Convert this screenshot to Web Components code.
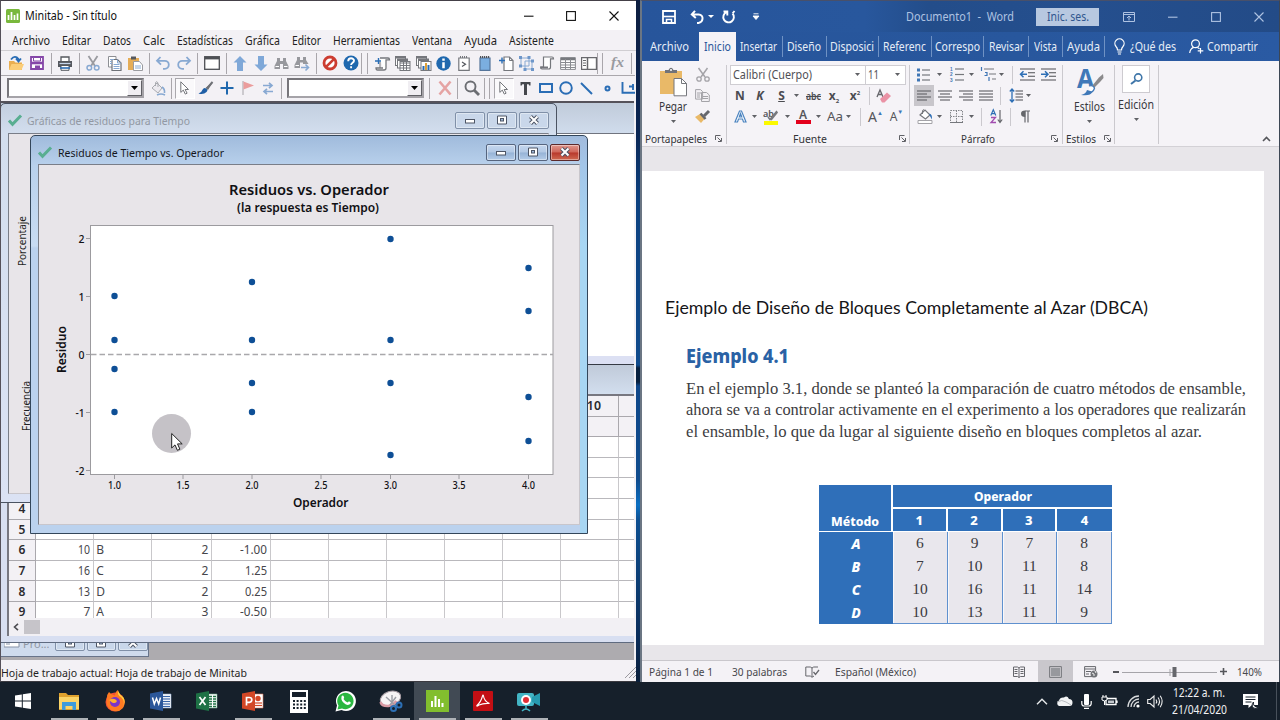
<!DOCTYPE html>
<html lang="es">
<head>
<meta charset="utf-8">
<title>Escritorio</title>
<style>
html,body{margin:0;padding:0;width:1280px;height:720px;overflow:hidden;background:#16202b;font-family:"Noto Sans","Open Sans",sans-serif}
</style>
</head>
<body>
<desk-top></desk-top>
<script>
/* Icon drawings: [width, height, markup] */
const G='#75777c', B='#2a6db5', L='#88a9d2';
const sheet=(x,y)=>`<rect x="${x}" y="${y}" width="10" height="9" fill="#fff" stroke="${G}"/><path d="M${x} ${y+1}h10" stroke="${G}" stroke-width="2"/>`;
const lines=(ys,x1,x2,c='#68696d')=>ys.map(y=>`<path d="M${x1} ${y}H${x2}" stroke="${c}" stroke-width="1.2"/>`).join('');
const ICONS={
 minitab:[14,14,`<rect width="14" height="14" rx="1.5" fill="#79b83c"/><path d="M2.5 11V6M5.5 11V3M8.5 11V6M11.5 11V4.5" stroke="#fff" stroke-width="1.7"/>`],
 min:[10,10,`<path d="M0 5.2h9.500" stroke="currentColor" stroke-width="1.1"/>`],
 max:[10,10,`<rect x=".6" y=".6" width="8.800" height="8.800" fill="none" stroke="currentColor" stroke-width="1.1"/>`],
 close:[10,10,`<path d="M.5.500l9 9M9.500.500l-9 9" stroke="currentColor" stroke-width="1.1"/>`],
 open:[16,16,`<path d="M1 6h5l1.500 1.500H14V15H1z" fill="#e9ae50"/><path d="M3.500 9H16l-2.500 6H1z" fill="#fbcd77"/><path d="M3 4.500Q7-.5 10.500 4v2.500M13 3.500l-2.500 3-2.500-3" fill="none" stroke="${B}" stroke-width="1.8"/>`],
 save:[14,14,`<path d="M1 1h12v12H1z" fill="#fff" stroke="#8546a8" stroke-width="1.800"/><path d="M3.500 1.500h7V5h-7z" fill="#fff" stroke="#8546a8"/><path d="M1 7h12" stroke="#8546a8" stroke-width="2.600"/><path d="M5 9.500h5V13H5z" fill="#8546a8"/>`],
 print:[16,15,`<path d="M4 5V1h8v4" fill="#fff" stroke="#55585e" stroke-width="1.300"/><path d="M1 5h14v6H1z" fill="#55585e"/><path d="M2.500 7.500h11" stroke="#c5d5ea" stroke-width="1.200"/><path d="M4 9.500h8v4.800H4z" fill="#fff" stroke="#55585e"/><path d="M3 12h10" stroke="${B}" stroke-width="1.600"/>`],
 cut:[14,15,`<path d="M2.500 0L9 10M11.500 0L5 10" stroke="#9a9ba0" stroke-width="1.800"/><circle cx="3.300" cy="11.800" r="2.300" fill="none" stroke="${L}" stroke-width="1.500"/><circle cx="10.700" cy="11.800" r="2.300" fill="none" stroke="${L}" stroke-width="1.500"/>`],
 copy:[15,15,`<path d="M1.500.500H9V11H1.500z" fill="#fff" stroke="#8d8f94"/><path d="M5 3.500h5.500L14 7v7.500H5z" fill="#fff" stroke="#6e7177" stroke-width="1.200"/><path d="M10.500 3.500V7H14M6.500 8.500h6M6.500 10.500h6M6.500 12.500h6M3 3.500h4M3 5.500h2M3 7.500h2" stroke="${L}" fill="none"/>`],
 paste:[15,15,`<path d="M0 2h11v12H0z" fill="#e5ad57"/><path d="M3 .5h5v3H3z" fill="#55585e"/><path d="M5.500 5.500h6L14.500 9v5.500h-9z" fill="#fff" stroke="#9a9ba0"/><path d="M7 10h6M7 12h6" stroke="${L}"/>`],
 undo:[16,14,`<path d="M5.500 1L2 4.800l4 3.800M2.300 4.800h7.500a4 4 0 0 1 0 8H8" fill="none" stroke="${L}" stroke-width="1.800"/>`],
 redo:[16,14,`<path d="M10.500 1L14 4.800l-4 3.800M13.700 4.800H6.200a4 4 0 0 0 0 8H8" fill="none" stroke="${L}" stroke-width="1.800"/>`],
 window:[16,14,`<rect x=".7" y=".7" width="14.600" height="12.600" fill="#fff" stroke="#4d4f54" stroke-width="1.300"/><path d="M1 2.200h14" stroke="#4d4f54" stroke-width="2.400"/>`],
 up:[14,15,`<path d="M7 0l6.500 6.500H10V15H4V6.500H.5z" fill="#7fa8d8"/>`],
 down:[14,15,`<path d="M7 15l6.500-6.500H10V0H4v8.500H.5z" fill="#7fa8d8"/>`],
 find:[15,13,`<path d="M3 1h3v3h3V1h3v3l2.500 5v3H9V7H6v5H.5V9L3 4z" fill="#97989d"/><path d="M1.500 9.500h3.500M10 9.500h3.500" stroke="#fff"/>`],
 findn:[16,15,`<path d="M3 1h3v3h3V1h3v3l2.500 4H9V6.500H6V12H.5V9L3 4z" fill="#97989d"/><path d="M1.500 9.500h3.500" stroke="#fff"/><path d="M7 11.500h7M11.500 8.500l3 3-3 3" stroke="#88a9d2" stroke-width="1.600" fill="none"/>`],
 stop:[16,16,`<circle cx="8" cy="8" r="6" fill="#fff" stroke="#cc3d31" stroke-width="2.800"/><path d="M3.800 12.200l8.400-8.400" stroke="#cc3d31" stroke-width="2.600"/>`],
 help:[16,16,`<circle cx="8" cy="8" r="7.500" fill="#1f68ae"/><path d="M5.200 6.200c0-4 5.800-3.600 5.800-.5C11 7.800 8.100 7.700 8.100 10M8.100 11.300v2" fill="none" stroke="#fff" stroke-width="1.900"/>`],
 session:[15,15,`<path d="M5 2h8q1.500 0 1.500 1.800H11V12q0 2-2 2H2.500q-1.500 0-1.500-2h7" fill="#fff" stroke="${G}" stroke-width="1.300"/><path d="M5 6v6" stroke="${G}"/><path d="M0 5h6M3.500 2v6" stroke="${B}" stroke-width="1.400"/>`],
 sheets:[16,15,sheet(.5,.5)+sheet(2.500,3)+`<rect x="5" y="5.500" width="10" height="9" fill="#fff" stroke="${G}"/><path d="M5 7h10M5 9.500h10M5 12h10M8.500 6v8M11.500 6v8" stroke="${G}"/>`],
 graphs:[16,15,sheet(.5,.5)+sheet(2.500,3)+`<rect x="5" y="5.500" width="10" height="9" fill="#fff" stroke="${G}"/><path d="M7.500 14v-4M12.500 14V9" stroke="${B}" stroke-width="2"/><path d="M10 14V7" stroke="#dfa139" stroke-width="2"/>`],
 info:[15,15,`<circle cx="7.500" cy="7.500" r="7.200" fill="#1f68ae"/><path d="M7.500 6.200v6M7.500 2.500v2.200" stroke="#fff" stroke-width="2.500"/>`],
 report:[12,15,`<path d="M.8 2h10.400v12.300H.8z" fill="#fff" stroke="${G}" stroke-width="1.200"/><path d="M2 1h8" stroke="${G}" stroke-width="2" stroke-dasharray="1 1"/><path d="M4 6l3.500 2.200L4 10.500" fill="none" stroke="#55585e" stroke-width="1.200"/>`],
 note:[12,15,`<path d="M1 2h10v12.300H1z" fill="#7baee0" stroke="#55759b" stroke-width="1.200"/><path d="M1 1h10" stroke="#505359" stroke-width="2" stroke-dasharray="1.200 .8"/>`],
 addpage:[15,15,`<path d="M5 1h5.500L14 4.500v10H5z" fill="#fff" stroke="${G}" stroke-width="1.200"/><path d="M10.500 1v3.500H14" fill="none" stroke="${G}"/><path d="M0 4.500h6M3 1.500v6" stroke="${B}" stroke-width="1.400"/>`],
 connect:[15,15,`<path d="M2 2h8v8H2zM6 5h7v8H6z" fill="none" stroke="${L}"/><path d="M0 0h3v3H0zM8.500 0h3v3h-3zM0 8.500h3v3H0zM4.500 12h3v3h-3zM12 12h3v3h-3zM12 3.500h3v3h-3z" fill="#6d96c9"/>`],
 script:[14,14,`<path d="M3.500 1H12q1.500 0 1.500 1.800H10.500V11q0 2-2 2H2Q.6 13 .6 11H3.500z" fill="#fff" stroke="${G}" stroke-width="1.200"/><path d="M.6 11.500H8" stroke="${G}" stroke-width="2"/>`],
 table:[16,13,`<path d="M.6.600h14.800v11.800H.6z" fill="#fff" stroke="#898b90"/><path d="M1 2h14" stroke="#77797e" stroke-width="2.500"/><path d="M1 5.500h14M1 8h14M1 10.500h14M5.500 2v10M10.500 2v10" stroke="#898b90"/>`],
 panel:[16,13,`<path d="M.6.600h14.800v11.800H.6z" fill="#fff" stroke="#68696d" stroke-width="1.200"/><path d="M6.500 0v13" stroke="#68696d" stroke-width="1.500"/><path d="M2 3.500h3M2 6h3M2 8.500h3" stroke="#68696d"/>`],
 bucket:[15,15,`<path d="M1 7l5-5 5 5-4 5z" fill="#eceaef" stroke="#a9abb0"/><path d="M4.500 5V1.500Q6-.5 7 2v4" fill="none" stroke="#a9abb0"/><path d="M11 6q3 2 2.500 6" fill="none" stroke="${L}" stroke-width="1.600"/><path d="M6 14q4-2 8 0" stroke="${L}" stroke-width="1.500" fill="none"/>`],
 arrow:[10,14,`<path d="M.8.800v10.600l2.500-2.300 2 4 1.800-.9-2-3.700h3.400z" fill="#fff" stroke="#75777c"/>`],
 brush:[16,14,`<path d="M15 .5L10 9 7.500 7z" fill="#6f7176"/><path d="M14.500 1L9 7.500" stroke="#6f7176" stroke-width="2"/><path d="M8 7.500Q10.500 9 8.500 11q-3 3-8 1.500 3-.5 3.800-3.500Q6 6 8 7.500z" fill="#1f5fa6"/>`],
 plus:[14,14,`<path d="M7 .5v13M.5 7h13" stroke="#1f68ae" stroke-width="2"/>`],
 flag:[12,14,`<path d="M1 0v14" stroke="#a5a3a8"/><path d="M1.500 .5L12 4.500 1.500 8.500z" fill="#eb9c9c"/>`],
 swap:[10,13,`<path d="M0 3.500h9M6 .8l3 2.700-3 2.700M10 9.500H1M4 6.800L1 9.500l3 2.700" fill="none" stroke="${L}" stroke-width="1.700"/>`],
 del:[14,14,`<path d="M1.500.500l11 13M12.500.500l-11 13" stroke="#e5a3a3" stroke-width="2.600"/>`],
 lens:[16,16,`<circle cx="6.500" cy="6.500" r="5" fill="none" stroke="#6b6d72" stroke-width="1.900"/><path d="M10 10l5 5" stroke="#6b6d72" stroke-width="2.800"/>`],
 tee:[11,13,`<path d="M.5 0h10v3.500H9.200L8.700 2.200H7V13H4V2.200H2.300L1.800 3.500H.5z" fill="#45474c"/>`],
 rect:[14,10,`<rect x="1" y="1" width="12" height="8" fill="none" stroke="${B}" stroke-width="2"/>`],
 circ:[14,14,`<circle cx="7" cy="7" r="5.800" fill="none" stroke="${B}" stroke-width="1.900"/>`],
 line:[13,13,`<path d="M1 1l11 11" stroke="${B}" stroke-width="2"/>`],
 dot:[7,7,`<circle cx="3.500" cy="3.500" r="2" fill="none" stroke="${B}" stroke-width="2"/>`],
 poly:[14,12,`<path d="M1.500 0v10.800H14M8 4.500h5M12 2v6" fill="none" stroke="${B}" stroke-width="1.900"/>`],
 fx:[15,16,`<text x="0" y="12" font-family="Liberation Serif,serif" font-style="italic" font-weight="600" font-size="15.500" fill="#9a9ba0">fx</text>`],
 check:[14,12,`<path d="M1 6.500l3.500 3.800L13 1.500" fill="none" stroke="#59ae91" stroke-width="3"/>`],
 drop:[5,3,`<path d="M0 0h5L2.500 3z" fill="#606166"/>`],
 dropw:[6,3,`<path d="M0 0h6L3 3z" fill="#fff"/>`],
 dropb:[7,4,`<path d="M0 0h7L3.500 4z" fill="#000"/>`],
 wsave:[14,14,`<path d="M1 1h12v12H1z" fill="none" stroke="#fff" stroke-width="1.800"/><path d="M1 6.500h12" stroke="#fff" stroke-width="1.600"/><path d="M4.500 13V9.500h5V13" fill="none" stroke="#fff" stroke-width="1.500"/>`],
 wundo:[14,14,`<path d="M5 .8L1.800 4.500 5.800 8M2 4.500h6.500q4.500.5 4 4.500-.5 3.500-4 4H7" fill="none" stroke="#fff" stroke-width="2"/>`],
 wredo:[14,14,`<path d="M4.500 2.200A5.300 5.300 0 1 0 10.500 3.500M5.300 5.500V1.500H1.500M10.500 3.500L12.500 1" fill="none" stroke="#fff" stroke-width="1.900"/>`],
 wmore:[6,7,`<path d="M.5.800h5M0 3h6L3 6.500z" stroke="#fff" fill="#fff" stroke-width=".9"/>`],
 wdisp:[12,10,`<path d="M.5.500h11v9H.5zM.5 2.500h11M6 8.500V4M4 6l2-2 2 2" fill="none" stroke="currentColor"/>`],
 bulb:[11,16,`<path d="M3.500 11q0-2-1.500-3.500A4.600 4.600 0 1 1 9 7.500Q7.500 9 7.500 11z" fill="none" stroke="#fff" stroke-width="1.200"/><path d="M3.500 13h4M4 15h3" stroke="#fff" stroke-width="1.200"/>`],
 person:[15,15,`<circle cx="6.500" cy="4.800" r="3.900" fill="none" stroke="#fff" stroke-width="1.200"/><path d="M.7 14q.5-4.500 4-5.600M8.500 8.500l2 1.200M11.500 9v5.500M8.700 11.800h5.600" fill="none" stroke="#fff" stroke-width="1.200"/>`],
 clip:[28,30,`<path d="M1 4h22v23H1z" fill="#e9b968"/><path d="M6 6V3h3.500Q12-1.500 14.500 3H18v3z" fill="#717379"/><circle cx="12" cy="3" r="1" fill="#fff"/><path d="M15 11.500h7.500l5 5v12.300H15z" fill="#fff" stroke="#75777c"/><path d="M22.500 11.500v5h5" fill="none" stroke="#75777c"/>`],
 wcut:[14,14,`<path d="M2.500 0l6.500 9M11.500 0L5 9" stroke="#a4a3a8" stroke-width="1.500"/><circle cx="3" cy="11" r="2.200" fill="none" stroke="#a4a3a8" stroke-width="1.300"/><circle cx="11" cy="11" r="2.200" fill="none" stroke="#a4a3a8" stroke-width="1.300"/>`],
 wcopy:[15,13,`<path d="M.6.600h5l2 2v7.500h-7zM6.500 3.500h5L14.300 6v6.500H6.500z" fill="#f3f1f5" stroke="#a4a3a8"/><path d="M2 4h4M2 6h3M2 8h3M8 7.500h5M8 9.500h5" stroke="#a4a3a8"/>`],
 painter:[15,13,`<path d="M0 7l5-3 4.500 5L6 13z" fill="#e9b968"/><path d="M5.500 3.500l5 5.500" stroke="#66676c" stroke-width="2.600"/><path d="M9 6l5-5" stroke="#66676c" stroke-width="3"/>`],
 clear:[14,14,`<path d="M0 8L3 1l3 7M1 5.500h4" fill="none" stroke="#66676c" stroke-width="1.300"/><path d="M3 10l7-6.500 4 3.500L7.500 13.500H5z" fill="#ea92a5"/>`],
 aout:[13,13,`<path d="M1 12L5.500 1h2L12 12H9.500L8.500 9h-4l-1 3zM5.300 7h2.500L6.500 3.500z" fill="#fff" stroke="#4c84c0" stroke-width="1.200"/>`],
 hilite:[16,16,`<text x="0" y="8" font-size="9" font-weight="600" font-family="Noto Sans,sans-serif" fill="#515257">ab</text><path d="M14 2L7 10.500 5 8M14.500 3L8 11" fill="none" stroke="#77797e" stroke-width="1.600"/><path d="M1 14h14" stroke="#fbf900" stroke-width="4"/>`],
 acolor:[15,15,`<text x="3" y="9.500" font-size="12" font-weight="600" font-family="Noto Sans,sans-serif" fill="#55565b">A</text><path d="M0 13h15" stroke="#e3001b" stroke-width="4"/>`],
 bullets:[13,14,[2,7,12].map(y=>`<rect x="0" y="${y-1.500}" width="3" height="3" fill="#3f76b5"/><path d="M5 ${y}h8" stroke="#75777c" stroke-width="1.200"/>`).join('')],
 numbers:[14,15,[2,7.500,13].map((y,i)=>`<text x="0" y="${y+1.700}" font-size="4.700" font-weight="700" font-family="Liberation Sans,sans-serif" fill="#3f76b5">${i+1}</text><path d="M5 ${y}h9" stroke="#75777c" stroke-width="1.200"/>`).join('')],
 multi:[16,15,`<path d="M1.500 0v4M5 5.500h2v3H4.500M9 10v4" stroke="#3f76b5" stroke-width="1.200" fill="none"/><path d="M4 2h10M9 7h7M12 12h4" stroke="#75777c" stroke-width="1.200"/>`],
 outdent:[15,13,lines([1,12],0,15)+lines([4.700,8.300],8,15)+`<path d="M0 6.300h7M3.500 3.300l-3 3 3 3" fill="none" stroke="#2e6fb5" stroke-width="1.500"/>`],
 indent:[15,13,lines([1,12],0,15)+lines([4.700,8.300],8,15)+`<path d="M0 6.300h7M4 3.300l3 3-3 3" fill="none" stroke="#2e6fb5" stroke-width="1.500"/>`],
 al:[14,11,lines([1,7],0,14)+lines([4,10],0,10)],
 ac:[14,11,lines([1,7],0,14)+lines([4,10],2,12)],
 ar:[14,11,lines([1,7],0,14)+lines([4,10],4,14)],
 aj:[14,11,lines([1,4,7,10],0,14)],
 spacing:[14,15,`<path d="M3 1v13M.8 3.500L3 1l2.200 2.500M.8 11.500L3 14l2.200-2.500" fill="none" stroke="#2e6fb5" stroke-width="1.300"/>`+lines([3,6,9,12],6.500,14)],
 wbucket:[16,15,`<path d="M3 6l5-5 5 5-4.500 4z" fill="#fff" stroke="#75777c" stroke-width="1.200"/><path d="M5.500 5V1.500Q6.500-.5 7.500 2" fill="none" stroke="#75777c"/><path d="M12.500 4.500q3.500 1.500 2 6-.8-3-2-4z" fill="#2e6fb5"/><path d="M1 11.500h14v3H1z" fill="#fff" stroke="#a4a3a8"/>`],
 borders:[13,13,`<path d="M.5.500h12v12H.5zM6.500.500v12M.5 6.500h12" fill="none" stroke="#85868b" stroke-dasharray="1.500 1"/><path d="M0 12.500h13" stroke="#75777c"/>`],
 sort:[13,15,`<path d="M.8 6.500L3.300.800l2.500 5.700M1.500 4.700h3.600" fill="none" stroke="#2e6fb5" stroke-width="1.200"/><path d="M1 8.500h4.500L1 13.500h5" fill="none" stroke="#a24db0" stroke-width="1.300"/><path d="M10 1v12M7.800 10.500L10 13.500l2.200-3" fill="none" stroke="#66676c" stroke-width="1.200"/>`],
 para:[10,13,`<path d="M5 1v11.500M8 1v11.500M10 1H5" stroke="#66676c" stroke-width="1.200" fill="none"/><path d="M5.300.500v6.500Q1 7 1 3.700T5.300.500z" fill="#66676c"/>`],
 styles:[28,30,`<text x="1" y="21" font-family="Noto Sans,sans-serif" font-weight="700" font-size="26" textLength="17" lengthAdjust="spacingAndGlyphs" fill="#3f78b8">A</text><path d="M16 19l7-8.500 4-3.500.5 4-3.500 4-6 6z" fill="#8b8a8c"/><path d="M13 19q4-1.500 5.500 2-1 4-5 5" fill="#fff" stroke="#3f78b8" stroke-width="1.300"/><path d="M5 28q5-1 6-5l5 1.500q-1 5-11 3.500z" fill="#3f78b8"/>`],
 edit:[28,28,`<rect x=".5" y=".5" width="27" height="27" fill="#fff" stroke="#cdcbd0"/><circle cx="16.200" cy="12.500" r="3.600" fill="none" stroke="#3f76a9" stroke-width="1.600"/><path d="M13.500 15.500L9 19" stroke="#3f76a9" stroke-width="2"/>`],
 launch:[7,7,`<path d="M.5 5V.5H5.500M2.500 2.500l3.500 3.500M6.500 3v3.500H3" fill="none" stroke="#606166"/>`],
 collapse:[9,6,`<path d="M1 5l3.500-3.500L8 5" fill="none" stroke="#55565b" stroke-width="1.600"/>`],
 proof:[14,12,`<path d="M.8 1h4.500l1.700 1 1.700-1H13M.8 1v9h4.500L7 11.300 9 10M7 2v9" fill="none" stroke="#66676c"/><path d="M8.500 6l2 2.500L14 4" fill="none" stroke="#66676c" stroke-width="1.300"/>`],
 read:[12,12,`<path d="M.5 1h4L6 2l1.500-1h4v9.500h-4L6 11.500l-1.500-1h-4zM6 2v9.500M1.500 3.500h3M1.500 5.500h3M1.500 7.500h3M7.500 3.500h3M7.500 5.500h3M7.500 7.500h3" fill="none" stroke="#66676c"/>`],
 pview:[13,12,`<path d="M.6.600h11.800v10.800H.6z" fill="none" stroke="#77787d"/>`+lines([3,5,7,9],2,11,'#77787d')],
 web:[14,12,`<path d="M.6.600h11v10H.6zM1 3h10M2 5.500h5M2 8h3" fill="none" stroke="#66676c"/><circle cx="10" cy="8" r="3.500" fill="#717277"/><path d="M8 7l2 1v2M11 5l1 2" stroke="#eee" fill="none"/>`],
 start:[16,16,`<path d="M0 2.500l6.800-1v6H0zM7.800 1.300L16 0v7.500H7.800zM0 8.500h6.800v6L0 13.500zM7.800 8.500H16V16l-8.200-1.300z" fill="#fff"/>`],
 explorer:[22,18,`<path d="M1 1h7l2 2h11v15H1z" fill="#e0a22e"/><path d="M1 5h20v12H1z" fill="#fbd467"/><path d="M4 10h14v8h-3.500v-4h-7v4H4z" fill="#3d9bdb"/>`],
 firefox:[22,22,`<circle cx="11" cy="12" r="9.500" fill="#f04e35"/><path d="M3 8Q1 16 7 20q7 3.500 12-2 4-7-1-12-3-1-4-6-3 2-3 5.500Q7 5 5 2 3 4 3 8z" fill="#ff7a22"/><path d="M14 1q-1 4 3 6 5 5 1.500 10.500Q22 12 19.500 7.500 16 5 14 1z" fill="#ffd33f"/><circle cx="11" cy="12" r="5" fill="#7a35c8"/><path d="M5 10q5-3 8 1-1 3-5 1.500" fill="#ffb02e"/>`],
 word:[22,20,`<path d="M11 3h10v14H11z" fill="#fff" stroke="#8da7cf" stroke-width=".6"/>`+lines([5.500,8,10.500,13,15.500],13,20,'#3765aa')+`<path d="M0 2.500L13 0v20L0 17.500z" fill="#2b579a"/><path d="M2.500 6.500L4.300 13 6.500 7.500 8.700 13l1.800-6.500" fill="none" stroke="#fff" stroke-width="1.500"/>`],
 excel:[22,20,`<path d="M11 3h10v14H11z" fill="#fff" stroke="#71a88a" stroke-width=".6"/><path d="M13 5.500h7M13 8h7M13 10.500h7M13 13h7M13 15.500h7" stroke="#217346" stroke-width="1.600" stroke-dasharray="3 1"/><path d="M0 2.500L13 0v20L0 17.500z" fill="#1e7145"/><path d="M3.500 6l6 8M9.500 6l-6 8" stroke="#fff" stroke-width="1.700"/>`],
 ppt:[22,20,`<path d="M11 3h10v14H11z" fill="#fff" stroke="#d87b60" stroke-width=".6"/><circle cx="16" cy="7.500" r="2.700" fill="#d24726"/>`+lines([12,14.500],13,20,'#d24726')+`<path d="M0 2.500L13 0v20L0 17.500z" fill="#d24726"/><path d="M4.500 14.500v-8h2.800q2.500 0 2.500 2.300T7.300 11.300H4.500" fill="none" stroke="#fff" stroke-width="1.700"/>`],
 calc:[18,23,`<rect width="18" height="23" fill="#fff"/><rect x="2" y="2" width="14" height="5" fill="#16202b"/><path d="M3 11h13M3 14.500h13M3 18h13" stroke="#16202b" stroke-width="2" stroke-dasharray="2 1.600"/>`],
 whats:[21,22,`<path d="M.5 21.500l1.500-6A10 10 0 1 1 6.500 20z" fill="#fff"/><path d="M2.500 19.500l1-4A8.200 8.200 0 1 1 7 18.500z" fill="#2bb741"/><path d="M6.500 6.500q1.500-2 2.500.5.5 1-.5 2 1.500 2.500 4 3.500 1-1.500 2-1 2 1 1 2.300-2 2-5 .5Q5.500 11 6.500 6.500z" fill="#fff"/>`],
 snip:[24,22,`<ellipse cx="11.500" cy="8.500" rx="10.500" ry="7" fill="#f6f3f4" stroke="#a89da4" transform="rotate(-18 11.500 8.500)"/><path d="M1.500 12q1.500 4.500 8 4 5-1 8-5" fill="none" stroke="#d99aa3" stroke-width="2.500"/><path d="M13 5v7M7 7l10 9M17 7l-6 8" stroke="#9b9da4" stroke-width="1.400"/><circle cx="20" cy="15" r="2.500" fill="none" stroke="#2c6fb5" stroke-width="2"/><circle cx="14.500" cy="18.500" r="2.500" fill="none" stroke="#2c6fb5" stroke-width="2"/>`],
 tminitab:[23,22,`<rect width="23" height="22" fill="#82be2e"/><path d="M6 17v-6M9.500 17V6M13 17V9M16.500 17v-4" stroke="#fff" stroke-width="2"/>`],
 acrobat:[20,20,`<rect width="20" height="20" rx="1" fill="#c30f14"/><path d="M3.500 15Q8 11 9.500 5q.5-2 1 0 .5 5 6 7.500-6-.5-10.500 1.500-2 1.500-2.500 1" fill="none" stroke="#fff" stroke-width="1.100"/>`],
 camera:[24,21,`<rect x="0" y="2" width="17" height="13" rx="2" fill="#43b5c5"/><path d="M15 6l8-4v13l-8-4z" fill="#279bb0"/><circle cx="9" cy="9" r="5" fill="#fff"/><circle cx="9" cy="9" r="3" fill="#e02f35"/><path d="M9 15v3M5 20q4-4 8 0" fill="none" stroke="#43b5c5" stroke-width="1.500"/>`],
 chev:[12,7,`<path d="M1 6.300L6 1.300l5 5" fill="none" stroke="#e8eaec" stroke-width="1.400"/>`],
 cloud:[17,10,`<path d="M3 10a3 3 0 0 1 0-5.500Q4 1 8 1.500q3-2.500 5 1.500 3.500 0 3.500 3.500T13.500 10z" fill="#f2f3f4"/><path d="M1 6q5-3 9 0l5 3" fill="none" stroke="#a9adb2" stroke-width=".8"/>`],
 mic:[11,15,`<rect x="3" width="5" height="11" rx="1" fill="#fff"/><path d="M.8 7v2.500q0 2.500 2.500 2.500h4.400q2.500 0 2.500-2.500V7M3 14.300h5" fill="none" stroke="#fff" stroke-width="1.200"/>`],
 battery:[16,12,`<path d="M4 3.500h10v6H4zM15 5.500v2.500" fill="none" stroke="#fff" stroke-width="1.300"/><path d="M6 5.500h6v2.500H6z" fill="#c5c9ce"/><path d="M0 2h5v3Q2.500 7 0 5zM1 0v2M4 0v2M2.500 6v4" stroke="#fff" fill="#16202b"/>`],
 wifi:[13,13,`<path d="M1 12A11 11 0 0 1 12 1M4 12a8 8 0 0 1 8-8M7 12a5 5 0 0 1 5-5" fill="none" stroke="#d9dbdd" stroke-width="1.300"/><circle cx="11" cy="11" r="1.600" fill="#fff"/>`],
 vol:[16,13,`<path d="M.7 4.500h2.500L7 1v11L3.200 8.500H.7z" fill="none" stroke="#eee" stroke-width="1.100"/><path d="M9 4.500q1.500 2 0 4M11 2.500q3 4 0 8M13.200.800q4 5.500 0 11.400" fill="none" stroke="#eee" stroke-width="1.100"/>`],
 notify:[16,16,`<path d="M0 1h15v11H9l-3.500 3V12H0z" fill="#fff"/><path d="M2.500 4h10M2.500 6.500h10M2.500 9h6" stroke="#16202b"/><path d="M10.500 15a4 4 0 0 1 0-6 4 4 0 0 0 5 5 4 4 0 0 1-5 1z" fill="#fff" stroke="#16202b"/>`],
 gmin:[12,8,`<rect x="1.500" y="3.500" width="9" height="3.500" fill="#fff" stroke="#4d5565" stroke-width="1"/>`],
 gmax:[12,10,`<path d="M1.500 1h9v8h-9z" fill="#fff" stroke="#4d5565"/><rect x="4.500" y="3.500" width="3" height="2.500" fill="#9db8da" stroke="#4d5565"/>`],
 gx:[12,10,`<path d="M2.500 1.500l7 7M9.500 1.500l-7 7" stroke="#4d5565" stroke-width="4"/><path d="M2.500 1.500l7 7M9.500 1.500l-7 7" stroke="#fff" stroke-width="2"/>`]
};

/* Base class: puts a style and markup in an open shadow root */
class Base extends HTMLElement{
  mount(css,html){
    const t=document.createElement('template');
    t.innerHTML=`<style>*{box-sizing:border-box}:host{box-sizing:border-box}${css}</style>${html}`;
    (this.shadowRoot||this.attachShadow({mode:'open'})).replaceChildren(t.content.cloneNode(true));
  }
}
const def=(n,css,html)=>customElements.define(n,class extends Base{connectedCallback(){this.mount(typeof css==='function'?css(this):css,typeof html==='function'?html(this):html)}});

/* Spaces out items along a line: [left, width, markup] */
const flow=(x0,items)=>{let x=x0;return items.map(([l,w,h])=>{const m=l-x;x=l+w;return `<span style="margin-left:${m}px;width:${w}px;flex:none;display:flex;align-items:center;justify-content:center">${h}</span>`}).join('')};
const ic=n=>`<ui-icon name="${n}"></ui-icon>`;
const ci=(c,n)=>{const w=ICONS[n][0];return [c-w/2,w,ic(n)]};
const tx=(l,r,s,st='')=>[l,r-l,`<fit-text w="${r-l}" style="${st}">${s}</fit-text>`];

customElements.define('ui-icon',class extends Base{connectedCallback(){
  const [w,h,m]=ICONS[this.getAttribute('name')];
  this.mount(`:host{display:block;flex:none;width:${w}px;height:${h}px}svg{display:block;overflow:visible}`,`<svg width="${w}" height="${h}" viewBox="0 0 ${w} ${h}">${m}</svg>`);
}});
/* One line of text condensed or widened to a given width */
customElements.define('fit-text',class extends Base{connectedCallback(){
  const w=+this.getAttribute('w');
  this.mount(`:host{display:block;flex:none;width:${w}px;white-space:nowrap}span{display:inline-block;transform-origin:0 50%}:host([strike]) span{text-decoration:line-through}`,`<span><slot></slot></span>`);
  const s=this.shadowRoot.querySelector('span');
  s.style.transform=`scaleX(${w/s.getBoundingClientRect().width})`;
}});
def('tool-sep',`:host{display:block;flex:none;width:1px;height:21px;background:#a9a6ab}`,'');
def('combo-box',`:host{display:flex;height:20px;width:100%;background:#fff;border:2px solid #77757a;border-right-color:#a5a3a8;border-bottom-color:#a5a3a8;justify-content:flex-end}div{width:15px;background:#f0eef2;border:1px solid #fff;border-right-color:#606065;border-bottom-color:#606065;display:flex;align-items:center;justify-content:center}`,`<div>${ic('dropb')}</div>`);
def('pressed-box',`:host{display:flex;width:20px;height:21px;background:#faf9fb;border:1px solid #aaa8ad;border-right-color:#fff;border-bottom-color:#fff;align-items:center;justify-content:center}`,`<slot></slot>`);

/* Framed child window with caption buttons */
def('glass-button',e=>`:host{display:flex;width:30px;height:17px;border:1px solid ${e.hasAttribute('hot')?'#5b2a2c':e.hasAttribute('dim')?'#8090a8':'#56657f'};border-radius:2px;align-items:center;justify-content:center;background:${e.hasAttribute('hot')?'linear-gradient(#e0978d,#cf6558 48%,#b8382b 52%,#cf6a52)':e.hasAttribute('dim')?'#c9d7ea':'linear-gradient(#c5d7ee,#b2c8e4 48%,#96b3d6 52%,#b4cce8)'};box-shadow:inset 0 0 0 1px rgba(255,255,255,.4)}`,`<slot></slot>`);
def('mdi-window',e=>{const a=e.hasAttribute('active');return `
:host{display:flex;flex-direction:column;border:1px solid ${a?'#33465a':'#4b5362'};border-radius:5px 5px 0 0;background:${a?'linear-gradient(#a2bbdc,#a3c6e9 30px,#a8d6f3 110px) right top/7px 100% no-repeat,linear-gradient(#a0bbdc,#b9d1ec 30px,#c8dcf3 110px,#bbd2ee 112px)':'linear-gradient(#c3cfe0,#d3deee 30px,#dbe2f4)'};padding:0 7px 8px;overflow:hidden}
header{height:${a?28:29}px;flex:none;display:flex;align-items:center;font-size:11.500px;color:${a?'#14171d':'#9298a3'};padding-top:${a?4:3}px}
.b{margin-left:auto;display:flex;gap:2px}
main{flex:1;min-height:0;background:#e8e5e9;border:1px solid #7a7e88;border-right-color:#c8c6cc;border-bottom-color:#c8c6cc;overflow:hidden}`},
 e=>{const k=e.hasAttribute('active')?'hot':'dim',d=k==='dim'?'dim':'';return `<header>${ic('check')}<fit-text w="${e.getAttribute('w')}" style="margin-left:${e.hasAttribute('active')?6:5}px">${e.getAttribute('label')}</fit-text><div class="b"><glass-button ${d}>${ic('gmin')}</glass-button><glass-button ${d}>${ic('gmax')}</glass-button><glass-button ${k}>${ic('gx')}</glass-button></div></header><main><slot></slot></main>`});

/* Residual plot */
customElements.define('residual-plot',class extends Base{connectedCallback(){
  const T=(x,y,s,w,o='')=>`<text x="${x}" y="${y}" textLength="${w}" lengthAdjust="spacingAndGlyphs" ${o}>${s}</text>`;
  const xs=[114.500,183,252,321,390.500,459,528.500];
  const pts=[[114.500,296,340,369,412],[252,282,340,383,412],[390.500,239,340,383,455],[528.500,268,311,397,441]];
  this.mount(`:host{display:block;width:541px;height:360px}svg{display:block;font-family:"Noto Sans",sans-serif;fill:#101014}`,
  `<svg width="541" height="360" viewBox="39 165 541 360">
  ${T(229,194.800,'Residuos vs. Operador',160,'font-size="15" font-weight="600"')}
  ${T(237,212,'(la respuesta es Tiempo)',142,'font-size="12.500" font-weight="600"')}
  <rect x="90.500" y="225.500" width="462.500" height="249" fill="#fff" stroke="#9c9b9f"/>
  <path d="M91 354.500H553" stroke="#a9a8ab" stroke-width="1.300" stroke-dasharray="5.500 3"/>
  ${[['2',239],['1',297],['0',355],['-1',413],['-2',471]].map(([s,y])=>`<path d="M86 ${y-.5}h4" stroke="#9c9b9f"/>`+T(s.length>1?75.500:78.500,y+3.800,s,s.length>1?9:6,'font-size="10.500" font-weight="500"')).join('')}
  ${xs.map((x,i)=>`<path d="M${x} 475v4" stroke="#9c9b9f"/>`+T(x-6.500,489.300,(1+i/2).toFixed(1),13,'font-size="10.500" font-weight="500"')).join('')}
  ${T(293,506.500,'Operador',55.500,'font-size="12.500" font-weight="600"')}
  ${T(0,0,'Residuo',47,'font-size="12.500" font-weight="600" transform="translate(65.500 373) rotate(-90)"')}
  ${pts.map(([x,...ys])=>ys.map(y=>`<circle cx="${x}" cy="${y}" r="3.200" fill="#0e4f96"/>`).join('')).join('')}
  </svg>`);
}});

/* Worksheet grid */
customElements.define('work-sheet',class extends Base{connectedCallback(){
  const rows=[['',...Array(9).fill(''),'C10',''],[],['1'],['2'],['3'],['4'],['5'],['6','10','B','2','-1.00'],['7','16','C','2','1.25'],['8','13','D','2','0.25'],['9','7','A','3','-0.50']];
  const W={'10':12,'16':12,'13':12,'-1.00':27,'1.25':22,'0.25':22,'-0.50':27,'C10':22};
  this.mount(`:host{display:flex;flex-direction:column;height:100%;background:#fff}
  .g{height:223px;overflow:hidden;display:grid;grid-template-columns:27px 58.300px 58px 60px 58.500px 58px 58px 58px 58px 58px 58.500px 16px;grid-auto-rows:20.600px;font-size:12px;color:#46464b}
  .g div{border-right:1px solid #c9c8cb;border-bottom:1px solid #b9b8bc;display:flex;align-items:center;justify-content:flex-end;padding:0 3px;overflow:hidden;white-space:nowrap}
  .g .h{background:#f3f1f5;font-weight:600;color:#2a2a2e;justify-content:center;border-color:#aaa8ad}
  .g .l{justify-content:flex-start;padding-left:2px}
  .s{height:18px;background:#f2f0f4;display:flex;align-items:center;padding-left:4px;gap:5px}
  .s i{width:16px;height:14px;background:#c6c4c9}
  svg{display:block}`,
  `<div class="g">${rows.map((r,i)=>Array.from({length:12},(_,j)=>{const v=r[j]||'';return `<div class="${i<2||j===0?'h':j===2?'l':''}">${v&&W[v]&&j?`<fit-text w="${W[v]}">${v}</fit-text>`:v}</div>`}).join('')).join('')}</div>
  <div class="s"><svg width="6" height="8" viewBox="0 0 6 8"><path d="M5 .8L1.500 4 5 7.200" fill="none" stroke="#4d4d52" stroke-width="1.600"/></svg><i></i></div>`);
}});

/* Statistics application window */
customElements.define('minitab-app',class extends Base{connectedCallback(){
  const menu=[['Archivo',12,50],['Editar',62,91],['Datos',103,131],['Calc',143,165],['Estadísticas',177,233],['Gráfica',245,280],['Editor',292,321],['Herramientas',333,400],['Ventana',412,452],['Ayuda',464,497],['Asistente',509,554]];
  const s=x=>[x,1,'<tool-sep></tool-sep>'];
  const t1=[ci(16,'open'),ci(37,'save'),s(51),ci(65,'print'),s(79),ci(93,'cut'),ci(114,'copy'),ci(135,'paste'),s(149),ci(163,'undo'),ci(184,'redo'),s(197),ci(212,'window'),s(226),ci(240,'up'),ci(261,'down'),ci(281,'find'),ci(302,'findn'),s(316),ci(329.500,'stop'),ci(350.500,'help'),s(361),s(367),ci(382,'session'),ci(403,'sheets'),ci(423.500,'graphs'),ci(443.500,'info'),ci(464,'report'),ci(485,'note'),ci(506,'addpage'),ci(526,'connect'),ci(547,'script'),ci(568,'table'),ci(588.500,'panel'),s(597),s(602),ci(618,'fx'),s(631)];
  const pr=`<pressed-box>${ic('arrow')}</pressed-box>`;
  const t2=[[7,137,'<combo-box></combo-box>'],ci(158,'bucket'),s(171),[175,20,pr],ci(206,'brush'),ci(227,'plus'),ci(248,'flag'),ci(268,'swap'),s(281),[287,137,'<combo-box></combo-box>'],s(429),ci(444.500,'del'),s(457),ci(472,'lens'),s(484),s(489),[494,20,pr],ci(525,'tee'),ci(545.500,'rect'),ci(566,'circ'),ci(586.500,'line'),ci(607,'dot'),ci(628,'poly')];
  this.mount(`:host{display:flex;flex-direction:column;width:636px;height:682px;background:#f3f1f5;border-top:1px solid #444047;border-left:1px solid #55515a;border-bottom:1px solid #3b3a40;overflow:hidden;color:#1f1f23;font-size:12px}
  .r{display:flex;align-items:center;flex:none}
  .t{height:29px;background:#fff;color:#111}.m{height:21px;border-bottom:1px solid #d0ced2}.a{height:25px;border-bottom:1px solid #aaa7ac;width:634px;overflow:hidden}.b{height:25px;padding-bottom:1px;width:634px;overflow:hidden}
  .w{position:relative;flex:1;margin-left:-1px;width:634px;background:#adabaf;border-top:2px solid #55525a;overflow:hidden}
  .w>*{position:absolute}
  .st{height:21px;padding-top:3px;justify-content:space-between;font-size:11.500px}
  .ws{left:0;top:261px;width:635px;height:279px;background:#d8dff1;border-top:1px solid #353a44;border-bottom:1px solid #5f6b80;display:flex;flex-direction:column;padding:0 0 7px 7px}
  .ws header{height:31px;flex:none;margin-left:-7px;background:linear-gradient(#c0cad9,#d2deee);border-bottom:2px solid #777780}
  .ws work-sheet{border-left:2px solid #777780;height:240px;flex:none}
  .sn{left:0;top:0;width:635px;height:261px;background:#fff;border-bottom:8px solid #dce0f3}
  .sn header{height:31px;background:linear-gradient(#c0cbda,#d0dcec);border-bottom:1px solid #70747e}
  .mini{left:0;top:540px;width:149px;height:14px;background:#cfdbed;border:1px solid #68748a;border-top:0;display:flex;font-size:11px;color:#9097a3;overflow:hidden;padding-left:3px;gap:2px}
  .mini glass-button{margin-top:-9px}
  .mini svg{display:block;flex:none}
  .mini span{margin:-7px 1px 0 1px;width:29px}
  `,
  `<div class="r t">${flow(1,[ci(13,'minitab'),tx(25,117,'Minitab - Sin título'),ci(528.500,'min'),ci(570.500,'max'),ci(613.500,'close')])}</div>
  <div class="r m">${flow(1,menu.map(([n,a,b])=>tx(a,b,n)))}</div>
  <div class="r a">${flow(1,t1)}</div><div class="r b">${flow(1,t2)}</div>
  <div class="w">
    <div class="sn"><header></header></div>
    <div class="ws"><header></header><work-sheet></work-sheet></div>
    <div class="mini"><svg width="16" height="5" viewBox="0 0 16 5"><path d="M0 0v4h15V0M2 1h4" fill="#fff" stroke="#8793a8"/></svg><span>Pro...</span><glass-button dim>${ic('gmax')}</glass-button><glass-button dim>${ic('gmax')}</glass-button><glass-button dim>${ic('gx')}</glass-button></div>
    <mdi-window label="Gráficas de residuos para Tiempo" w="163" style="left:0;top:0;width:557px;height:400px">
      <svg width="30" height="360" viewBox="9 134 30 360" font-family="Noto Sans" font-size="11" fill="#1f1f23"><text transform="translate(25.500 266) rotate(-90)" textLength="50" lengthAdjust="spacingAndGlyphs">Porcentaje</text><text transform="translate(30 431) rotate(-90)" textLength="50" lengthAdjust="spacingAndGlyphs">Frecuencia</text></svg>
    </mdi-window>
    <mdi-window active label="Residuos de Tiempo vs. Operador" w="166" style="left:30px;top:32px;width:558px;height:399px"><residual-plot></residual-plot></mdi-window>
    <svg style="left:152px;top:311px" width="40" height="42" viewBox="152 414 40 42"><circle cx="171.500" cy="433.500" r="19.500" fill="#c5c2c7"/><path d="M171.700 433.500v14.500l3.300-3.100 2.400 5.400 2.500-1.100-2.400-5.300h4.700z" fill="#fff" stroke="#222" stroke-width="1"/></svg>
  </div>
  <div class="r st"><fit-text w="246">Hoja de trabajo actual: Hoja de trabajo de Minitab</fit-text><svg width="12" height="12"><path d="M1 12L12 1M5 12l7-7M9 12l3-3" stroke="#9b9a9f"/></svg></div>`);
}});

/* Word ribbon group: three rows and a caption */
def('ribbon-group',e=>`:host{display:flex;flex-direction:column;width:${e.getAttribute('w')}px;height:86px;flex:none;padding-top:3px;background:linear-gradient(#cbc9ce,#cbc9ce) right 0 top 4px/1px 79px no-repeat;color:#3f3f44}
 ::slotted(.row){height:21px;display:flex;align-items:center;flex:none}
 ::slotted(.big){height:63px;display:flex;align-items:flex-start;flex:none}
 footer{height:18px;margin-top:2px;flex:none;display:flex;align-items:center;font-size:11px;color:#333338}`,`<slot></slot><footer><slot name="cap"></slot></footer>`);

customElements.define('word-table',class extends Base{connectedCallback(){
  const d=[['A',6,9,7,8],['B',7,10,11,8],['C',10,16,11,14],['D',10,13,11,9]];
  this.mount(`:host{display:grid;width:293px;height:139px;grid-template-columns:74px repeat(4,54.750px);grid-template-rows:24px 23px repeat(4,23px);background:#2f6fb9;color:#fff;font:800 13px "Noto Sans",sans-serif}
  div{display:flex;align-items:center;justify-content:center}
  .m{grid-row:1/3;align-items:flex-end;border-bottom:1.500px solid #fff;border-right:2px solid #fff;padding-bottom:1px}
  .o{grid-column:2/6;border-bottom:2px solid #fff;padding-top:1px}
  .n{border-right:2px solid #fff;border-bottom:1px solid #fff}.n:nth-of-type(6){border-right:0}
  .k{font-style:italic;font-size:14px}
  .v{background:#e9e7ed;color:#3a3a3f;font:15.500px "Liberation Serif",serif;border-right:1px solid #5f91cf;box-shadow:inset 1px 0 #f8f8fb}
  .z{border-bottom:1px solid #5f91cf}`,
  `<div class="m"><fit-text w="48">Método</fit-text></div><div class="o"><fit-text w="58">Operador</fit-text></div>${[1,2,3,4].map(n=>`<div class="n">${n}</div>`).join('')}${d.map((r,i)=>r.map((v,j)=>`<div class="${j?'v':'k'}${i===3&&j?' z':''}">${v}</div>`).join('')).join('')}`);
}});

customElements.define('word-app',class extends Base{connectedCallback(){
  const v=(x,h=18)=>[x,1,`<i style="width:1px;height:${h}px;background:#cbc9ce"></i>`];
  const ts=x=>[x,1,'<i style="width:1px;height:21px;background:#6f92c4"></i>'];
  const g=(x,s,st)=>[x-10,20,`<b style="${st||''}">${s}</b>`];
  this.mount(`:host{display:flex;flex-direction:column;width:640px;height:684px;border-left:2px solid #6b7683;border-top:1px solid #48506a;border-right:1px solid #3c4654;background:#e8e6ea;font-size:12px}
  .r{display:flex;align-items:center;flex:none}
  .t{height:31px;background:linear-gradient(90deg,#27559b,#28579d 35%,#234d8a 45%,#254f8e 70%,#234b87);color:#afc3e2}
  .k{height:29px;background:linear-gradient(90deg,#27559b,#28579d 60%,#2a5aa3);color:#e6edf7}
  .in{background:#f5f3f7;color:#2b579a;width:37px;height:29px;display:flex;align-items:center;justify-content:center}
  .ses{width:63px;height:18px;background:#b7c8e0;color:#30568e;display:flex;align-items:center;justify-content:center}
  .rib{height:86px;display:flex;background:#f5f3f7;border-bottom:1px solid #d3d1d6}
  .rib b{font-size:12px;color:#4b4c51;line-height:16px;text-align:center}
  .box{height:20px;background:#fff;border:1px solid #cfcdd2;display:flex;align-items:center;justify-content:space-between;padding:0 5px 0 2px;width:100%;color:#505055}
  .sel{width:20px;height:21px;background:#c8c6cb;display:flex;align-items:center;justify-content:center}
  .c{width:100%;display:flex;flex-direction:column;align-items:center;color:#38383d}
  .doc{flex:1;padding-top:24px}
  .page{width:622px;height:474px;background:#fff;display:flex;flex-direction:column;color:#3c3c41;padding-left:44px}
  .page>*{flex:none}
  .h{margin:124px 0 0 -21.500px;height:24px;line-height:24px;font-family:Lato,"Noto Sans",sans-serif;font-size:18px;color:#151518}
  .e{margin-top:24px;height:26px;line-height:26px;font-weight:800;font-size:19.500px;color:#2a62a5}
  .p{height:21.300px;line-height:21.300px;font-family:"Liberation Serif",serif;font-size:17.500px}
  .s{height:22px;background:#f4f2f6;border-top:1px solid #c9c7cc;color:#47474c;font-size:11px}
  .bot{height:2px;background:#77777e}`,
  `<div class="r t">${flow(642,[ci(669,'wsave'),ci(696.500,'wundo'),ci(711,'dropw'),ci(728.500,'wredo'),ci(755.500,'wmore'),tx(906,1014,'Documento1&nbsp; -&nbsp; Word'),[1036,63,'<div class="ses"><fit-text w="42">Inic. ses.</fit-text></div>'],ci(1129,'wdisp'),ci(1172.500,'min'),ci(1215.500,'max'),ci(1258.500,'close')])}</div>
  <div class="r k">${flow(642,[tx(650,689,'Archivo'),[699,37,'<div class="in"><fit-text w="27">Inicio</fit-text></div>'],tx(740,777,'Insertar'),ts(782),tx(787,821,'Diseño'),ts(826),tx(830,874,'Disposici'),ts(878),tx(883,926,'Referenc'),ts(931),tx(935,980,'Correspo'),ts(983),tx(989,1024,'Revisar'),ts(1028),tx(1034,1057,'Vista'),ts(1062),tx(1067,1100,'Ayuda'),ts(1104),ci(1119.500,'bulb'),tx(1130,1176,'¿Qué des'),ci(1196.500,'person'),tx(1207,1258,'Compartir')])}</div>
  <div class="rib">
   <ribbon-group w="85"><div class="big">${flow(642,[[656,34,`<div class="c" style="padding-top:3px">${ic('clip')}<fit-text w="28" style="line-height:16px;margin-top:2px">Pegar</fit-text><div style="margin-top:5px">${ic('drop')}</div></div>`],[695,15,`<div class="c" style="height:63px;justify-content:space-around">${ic('wcut')}${ic('wcopy')}${ic('painter')}</div>`]])}</div><div slot="cap" class="r">${flow(642,[tx(645,707,'Portapapeles'),ci(718.500,'launch')])}</div></ribbon-group>
   <ribbon-group w="183"><div class="row">${flow(727,[[730,136,`<div class="box"><fit-text w="79">Calibri (Cuerpo)</fit-text>${ic('drop')}</div>`],[865,41,`<div class="box"><fit-text w="11">11</fit-text>${ic('drop')}</div>`]])}</div>
    <div class="row">${flow(727,[g(740,'N'),g(760,'K','font-style:italic'),g(781.500,'S','text-decoration:underline'),ci(796.500,'drop'),[805,16,'<fit-text strike w="15" style="font-size:10px;font-weight:600;color:#4b4c51">abc</fit-text>'],[828,12,'<b>x<sub style="font-size:6px;line-height:0">2</sub></b>'],[849,12,'<b>x<sup style="font-size:6px;line-height:0">2</sup></b>'],v(869),ci(884,'clear')])}</div>
    <div class="row">${flow(727,[ci(740,'aout'),ci(754,'drop'),ci(771,'hilite'),ci(787,'drop'),ci(803,'acolor'),ci(818.500,'drop'),tx(827,843,'Aa','color:#55565b'),ci(848.500,'drop'),v(860),[869,13,'<span style="font-size:14px;color:#55565b">A<sup style="font-size:6px;line-height:0;vertical-align:7px;color:#3f76b5">▲</sup></span>'],[890,13,'<span style="font-size:12px;color:#55565b">A<sup style="font-size:6px;line-height:0;vertical-align:7px;color:#3f76b5">▼</sup></span>']])}</div>
    <div slot="cap" class="r">${flow(727,[tx(793,827,'Fuente'),ci(902,'launch')])}</div></ribbon-group>
   <ribbon-group w="153"><div class="row">${flow(910,[ci(923.500,'bullets'),ci(939.500,'drop'),ci(956.500,'numbers'),ci(971,'drop'),ci(988,'multi'),ci(1001.500,'drop'),v(1012),ci(1027.500,'outdent'),ci(1048,'indent')])}</div>
    <div class="row">${flow(910,[[914,20,`<div class="sel">${ic('al')}</div>`],ci(945,'ac'),ci(965.500,'ar'),ci(986,'aj'),v(1000),ci(1015.500,'spacing'),ci(1028.500,'drop')])}</div>
    <div class="row">${flow(910,[ci(924.500,'wbucket'),ci(939.500,'drop'),ci(956,'borders'),ci(971.500,'drop'),v(981),ci(996.500,'sort'),v(1010),ci(1025,'para')])}</div>
    <div slot="cap" class="r">${flow(910,[tx(961,995,'Párrafo'),ci(1054.500,'launch')])}</div></ribbon-group>
   <ribbon-group w="52"><div class="big">${flow(1063,[[1074,31,`<div class="c" style="padding-top:3px">${ic('styles')}<fit-text w="31" style="line-height:16px;margin-top:2px">Estilos</fit-text><div style="margin-top:5px">${ic('drop')}</div></div>`]])}</div><div slot="cap" class="r">${flow(1063,[tx(1066,1096,'Estilos'),ci(1107.500,'launch')])}</div></ribbon-group>
   <ribbon-group w="44"><div class="big">${flow(1115,[[1117,38,`<div class="c" style="padding-top:1px">${ic('edit')}<fit-text w="36" style="line-height:16px;margin-top:4px">Edición</fit-text><div style="margin-top:5px">${ic('drop')}</div></div>`]])}</div></ribbon-group>
   <div style="flex:1;display:flex;align-items:flex-end;justify-content:flex-end;padding:0 8px 4px">${ic('collapse')}</div>
  </div>
  <div class="doc"><div class="page">
   <fit-text class="h" w="483">Ejemplo de Diseño de Bloques Completamente al Azar (DBCA)</fit-text>
   <fit-text class="e" w="103">Ejemplo 4.1</fit-text>
   <fit-text class="p" w="560" style="margin-top:9px">En el ejemplo 3.1, donde se planteó la comparación de cuatro métodos de ensamble,</fit-text>
   <fit-text class="p" w="560">ahora se va a controlar activamente en el experimento a los operadores que realizarán</fit-text>
   <fit-text class="p" w="516">el ensamble, lo que da lugar al siguiente diseño en bloques completos al azar.</fit-text>
   <word-table style="margin:43px 0 0 133px"></word-table>
  </div></div>
  <div class="r s">${flow(642,[tx(649,713,'Página 1 de 1'),tx(732,787,'30 palabras'),ci(811.500,'proof'),tx(835,916,'Español (México)'),ci(1019,'read'),[1038,35,`<div style="width:35px;height:21px;background:#c9c7cc;display:flex;align-items:center;justify-content:center">${ic('pview')}</div>`],ci(1091,'web'),[1113,6,'<i style="width:6px;height:2px;background:#55565b"></i>'],[1122,95,'<svg width="95" height="12"><path d="M0 6.500H95" stroke="#a5a4a9"/><path d="M48 3v7" stroke="#a5a4a9"/><path d="M50.500 1h4v10h-4z" fill="#66676c"/></svg>'],[1220,7,'<svg width="7" height="7"><path d="M3.500 0v7M0 3.500h7" stroke="#55565b" stroke-width="1.600"/></svg>'],tx(1237,1262,'140%')])}</div><div class="bot"></div>`);
}});

customElements.define('task-bar',class extends Base{connectedCallback(){
  const apps=['start','explorer*','firefox*','word*','excel','ppt*','calc','whats','snip*','tminitab*+','acrobat*','camera*'];
  this.mount(`:host{display:flex;width:1280px;height:38px;background:#16202b;color:#f0f1f2;font-size:12px}
  .a{width:46px;height:38px;display:flex;align-items:center;justify-content:center;flex:none}
  .u{background:linear-gradient(#aeb2b6,#aeb2b6) center bottom/37px 2px no-repeat}.on{background-color:#414a54}
  .tr{display:flex;align-items:center;margin-left:auto;width:727px;height:38px}
  .cl{display:flex;flex-direction:column;align-items:center;line-height:17px;padding-bottom:1px}`,
  apps.map(n=>`<div class="a ${n.includes('*')?'u':''} ${n.includes('+')?'on':''}">${ic(n.replace(/[*+]/g,''))}</div>`).join('')+
  `<div class="tr">${flow(553,[ci(1042,'chev'),ci(1064.500,'cloud'),ci(1086.500,'mic'),ci(1109.500,'battery'),ci(1133,'wifi'),ci(1155,'vol'),[1171,56,'<div class="cl"><fit-text w="52">12:22 a. m.</fit-text><fit-text w="55">21/04/2020</fit-text></div>'],ci(1250.500,'notify'),[1276,1,'<i style="width:1px;height:38px;background:#48515b"></i>']])}</div>`);
}});
def('desk-top',`:host{display:flex;flex-direction:column;width:1280px;height:720px;background:#16202b}
 .top{display:flex;height:682px;flex:none}
 .gap{width:4px;flex:none;background:linear-gradient(#0d1e40,#0a2552 130px,#0c4180 200px,#104b8c 365px,#08213f 368px,#08213f 382px,#0f4789 386px,#0f4c8d 480px,#0a6fc2 505px,#0d4f91 520px,#0a2c58 640px,#0a1f3a)}`,
 `<div class="top"><minitab-app></minitab-app><div class="gap"></div><word-app></word-app></div><task-bar></task-bar>`);
</script>
</body>
</html>
